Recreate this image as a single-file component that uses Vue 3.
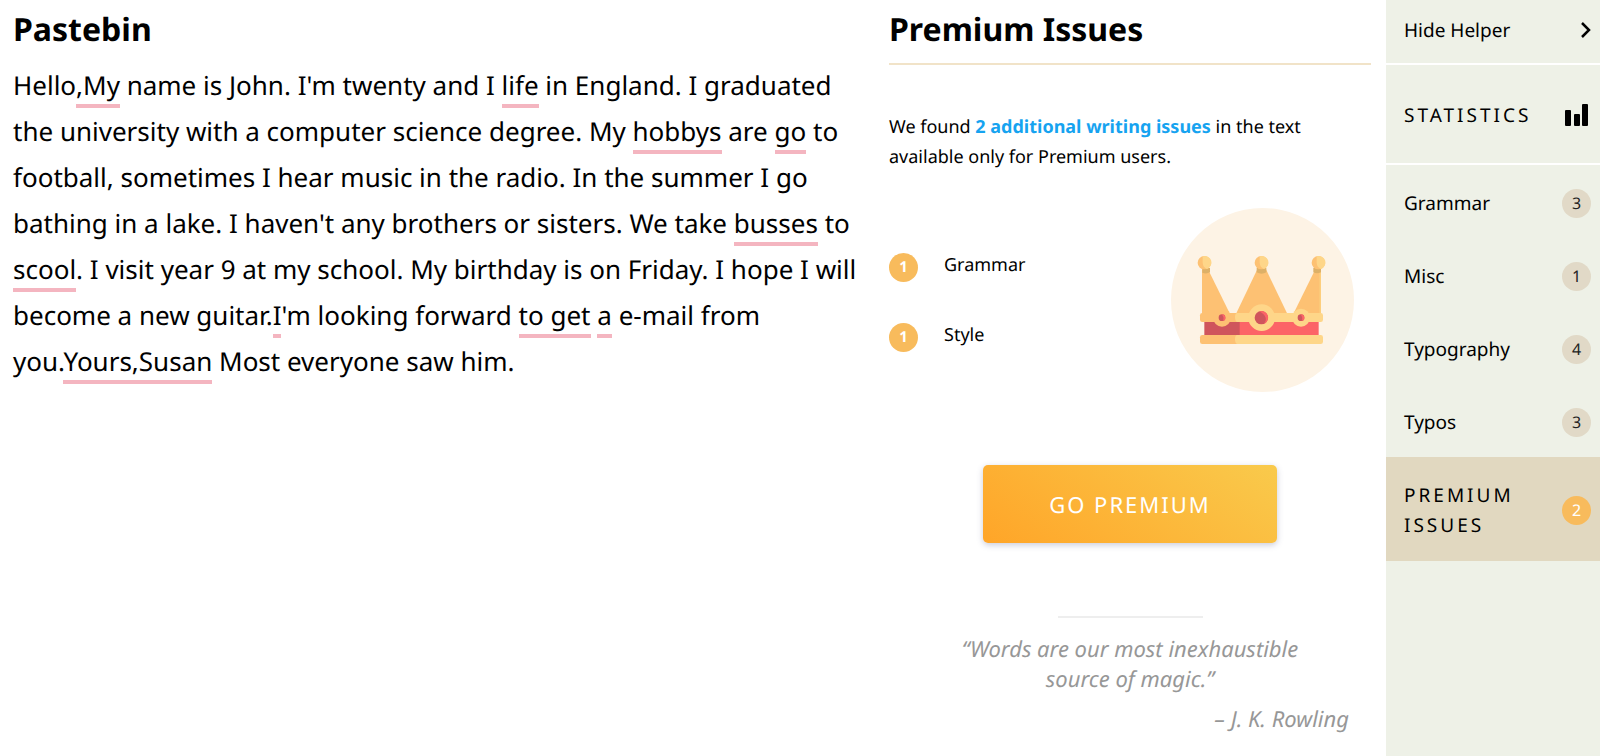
<script setup>
const text = [
  { t: 'Hello' }, { t: ',My', e: true }, { t: " name is John. I'm twenty and I " }, { t: 'life', e: true },
  { t: ' in England. I graduated the university with a computer science degree. My ' }, { t: 'hobbys', e: true },
  { t: ' are ' }, { t: 'go', e: true },
  { t: " to football, sometimes I hear music in the radio. In the summer I go bathing in a lake. I haven't any brothers or sisters. We take " },
  { t: 'busses', e: true }, { t: ' to ' }, { t: 'scool', e: true },
  { t: '. I visit year 9 at my school. My birthday is on Friday. I hope I will become a new guitar.' },
  { t: 'I', e: true }, { t: "'m looking forward " }, { t: 'to get', e: true }, { t: ' ' }, { t: 'a', e: true },
  { t: ' e-mail from you.' }, { t: 'Yours,Susan', e: true }, { t: ' Most everyone saw him.' },
]
const found = [
  { name: 'Grammar', count: 1 },
  { name: 'Style', count: 1 },
]
const categories = [
  { name: 'Grammar', count: 3 },
  { name: 'Misc', count: 1 },
  { name: 'Typography', count: 4 },
  { name: 'Typos', count: 3 },
]
</script>

<template>
  <div class="app">
    <main class="editor">
      <h1>Pastebin</h1>
      <p class="body"><template v-for="(s, i) in text" :key="i"><span v-if="s.e" class="issue">{{ s.t }}</span><template v-else>{{ s.t }}</template></template></p>
    </main>

    <section class="panel">
      <h2>Premium Issues</h2>
      <p class="intro">We found <strong>2 additional writing issues</strong> in the text available only for Premium users.</p>
      <div class="summary">
        <ul class="found">
          <li v-for="f in found" :key="f.name">
            <span class="badge gold bold">{{ f.count }}</span>
            <span class="name">{{ f.name }}</span>
          </li>
        </ul>
        <svg class="crown" viewBox="33 24 549 552" aria-hidden="true">
          <ellipse cx="307.500" cy="300" rx="274.500" ry="276" fill="#fdf3e5" />
          <path d="M126 208H144L212 346H126Z" fill="#fdc173" />
          <path d="M292 208H318L384 346H226Z" fill="#fdc173" />
          <path d="M466 208H483V346H398Z" fill="#fdc173" />
          <path d="M478 208H483V346H478Z" fill="#fdce7d" />
          <path d="M127 204H150V217Q139 223 127 218Z" fill="#ddb067" />
          <path d="M290 204H319V217Q305 225 290 217Z" fill="#ddb067" />
          <path d="M460 204H483V217Q471 223 460 217Z" fill="#ddb067" />
          <g v-for="x in [133, 304, 475]" :key="x">
            <circle :cx="x" cy="188" r="20" fill="#fdc173" />
            <path :d="`M${x - 5} 169A20 20 0 1 1 ${x + 8} 207Q${x - 4} 202 ${x - 5} 188Z`" fill="#fed689" />
          </g>
          <rect x="133" y="362" width="108" height="46" fill="#cf555c" />
          <rect x="239" y="362" width="237" height="46" fill="#fc6467" />
          <rect x="120" y="339" width="150" height="27" rx="7" fill="#fdc173" />
          <path d="M233 339H482Q489 339 489 346V359Q489 366 482 366H233Q225 366 225 352T233 339Z" fill="#fed689" />
          <rect x="120" y="405" width="150" height="27" rx="7" fill="#fdc173" />
          <path d="M233 405H482Q489 405 489 412V425Q489 432 482 432H233Q225 432 225 418T233 405Z" fill="#fed689" />
          <circle cx="186" cy="353" r="27" fill="#fdc173" />
          <circle cx="423" cy="353" r="27" fill="#fed689" />
          <circle cx="305" cy="353" r="40" fill="#fed689" />
          <circle cx="186" cy="353" r="10" fill="#cf555c" />
          <path d="M184 343A10 10 0 1 1 188 363Q195 352 184 343Z" fill="#fc6467" />
          <circle cx="423" cy="353" r="10" fill="#cf555c" />
          <path d="M421 343A10 10 0 1 1 425 363Q430 352 421 343Z" fill="#fc6467" />
          <circle cx="304" cy="353" r="20" fill="#cf555c" />
          <path d="M298 334A20 20 0 1 1 311 372Q329 352 298 334Z" fill="#fc6467" />
        </svg>
      </div>
      <button class="go" type="button">GO PREMIUM</button>
      <hr />
      <blockquote>
        <p>“Words are our most inexhaustible source of magic.”</p>
        <footer>– J. K. Rowling</footer>
      </blockquote>
    </section>

    <nav class="side">
      <button class="row hide" type="button">
        <span>Hide Helper</span>
        <svg class="chevron" viewBox="0 0 10 16" aria-hidden="true"><path d="M1 1L8 8L1 15" fill="none" stroke="#000" stroke-width="2.500" /></svg>
      </button>
      <button class="row stats" type="button">
        <span>STATISTICS</span>
        <svg class="bars" viewBox="0 0 23 22" aria-hidden="true">
          <rect x="0" y="6" width="6" height="16" rx="1" />
          <rect x="9" y="10" width="6" height="12" rx="1" />
          <rect x="17" y="0" width="6" height="22" rx="1" />
        </svg>
      </button>
      <button v-for="c in categories" :key="c.name" class="row cat" type="button">
        <span>{{ c.name }}</span><span class="badge">{{ c.count }}</span>
      </button>
      <button class="row premium" type="button">
        <span>PREMIUM ISSUES</span><span class="badge gold">2</span>
      </button>
    </nav>
  </div>
</template>

<style>
body { margin: 0; background: #fff; }
</style>

<style scoped>
.app {
  display: grid;
  grid-template-columns: minmax(0, 1fr) 482px 214px;
  min-height: 100vh;
  font-family: "Noto Sans", sans-serif;
  text-rendering: geometricPrecision;
  color: #000;
}
h1, h2, p, ul, blockquote { margin: 0; padding: 0; }
button { font: inherit; color: inherit; text-rendering: inherit; border: 0; cursor: pointer; }
.editor { padding: 8px 37px 0 13px; }
h1, h2 { font-size: 32px; line-height: 44px; font-weight: 700; }
.body { margin-top: 10px; font-size: 26px; line-height: 46px; }
.issue { border-bottom: 4px solid #f4b5c0; padding-bottom: 1px; }

.panel { padding-top: 8px; margin-right: 15px; margin-left: -15px; }
h2 { padding-bottom: 11px; border-bottom: 2px solid #f1e3c8; }
.intro { margin-top: 47px; padding-right: 24px; font-size: 18px; line-height: 30px; }
.intro strong { color: #16a3f0; }
.summary { display: flex; align-items: center; justify-content: space-between; margin-top: 36px; padding-right: 17px; }
.found { list-style: none; display: grid; gap: 38px; padding-top: 5px; }
.found li { display: flex; align-items: center; gap: 26px; font-size: 18px; line-height: 30px; }
.name { padding-bottom: 6px; line-height: 26px; }
.crown { width: 183px; height: 184px; }
.badge {
  display: flex; align-items: center; justify-content: center; flex: none;
  width: 29px; height: 29px; border-radius: 50%;
  background: #e1d9c7; color: #222; font-size: 16px; line-height: 29px; letter-spacing: 0;
}
.gold { background: #f8bb5c; color: #fff; }
.bold { font-weight: 700; font-size: 15px; }
.go {
  display: block; width: 294px; height: 78px; margin: 73px auto 0; padding: 2px 0 0;
  border-radius: 5px; background: linear-gradient(35deg, #ffa528, #f9ca4c);
  box-shadow: 0 2px 6px rgba(60, 70, 120, 0.28);
  color: #fff; font-size: 22px; letter-spacing: 2px;
}
hr { width: 145px; height: 2px; margin: 73px auto 0; border: 0; background: #eee; }
blockquote { margin-top: 16px; padding: 0 22px; font-size: 22px; line-height: 30px; font-style: italic; color: #979797; text-align: center; }
blockquote p { padding: 0 40px; }
blockquote footer { margin-top: 10px; text-align: right; }

.side { display: flex; flex-direction: column; background: #eef1e7; font-size: 19px; }
.row {
  display: flex; align-items: center; justify-content: space-between; gap: 20px;
  padding: 0 9px 0 18px; background: transparent; text-align: left; line-height: 30px;
}
.hide { height: 65px; padding-bottom: 4px; border-bottom: 2px solid #fff; }
.stats { height: 100px; padding-top: 1px; padding-right: 12px; border-bottom: 2px solid #fff; letter-spacing: 3px; }
.cat { height: 73px; padding-top: 3px; }
.premium { height: 104px; padding-top: 2px; background: #e1d8c0; letter-spacing: 3px; }
.chevron { width: 10px; height: 16px; }
.bars { width: 23px; height: 22px; }
</style>
